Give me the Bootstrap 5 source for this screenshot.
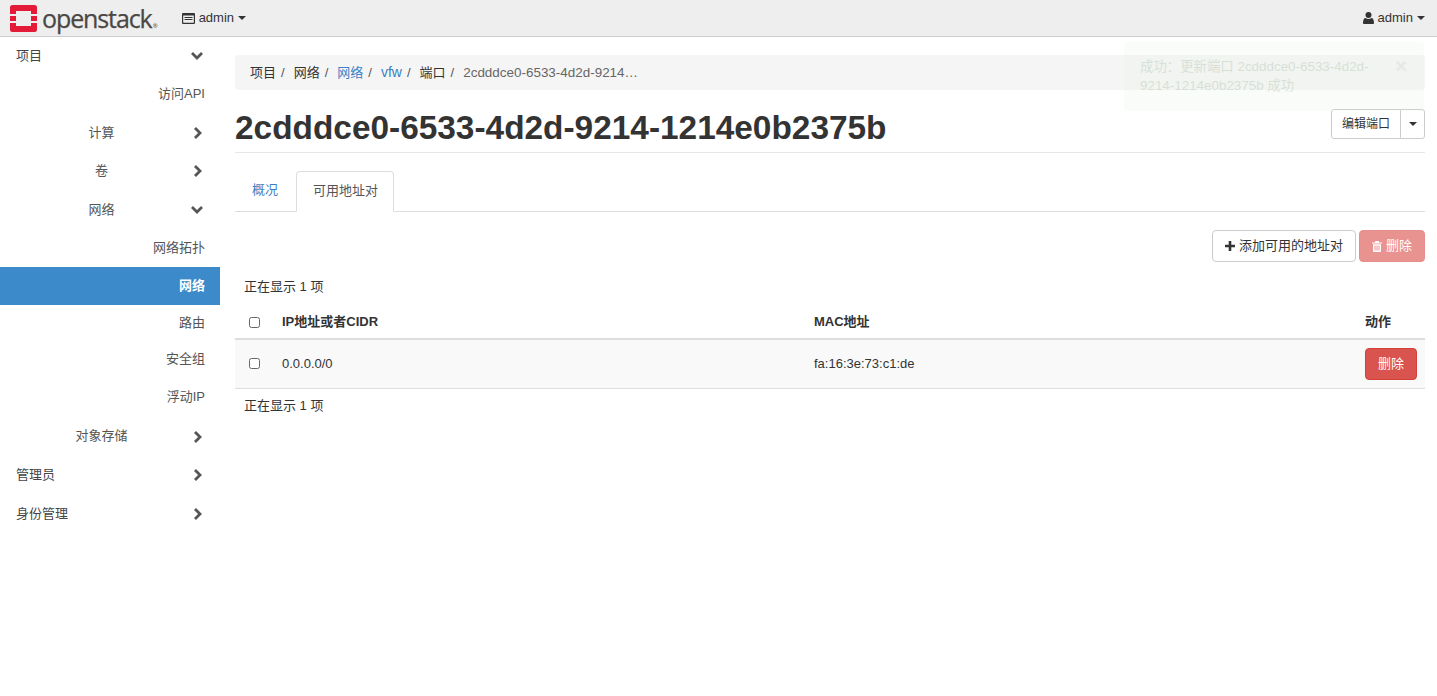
<!DOCTYPE html>
<html lang="zh">
<head>
<meta charset="utf-8">
<title>端口详情</title>
<link href="https://cdn.jsdelivr.net/npm/bootstrap@5.3.0/dist/css/bootstrap.min.css" rel="stylesheet">
<style>
html,body{height:100%}
body{font-family:"Liberation Sans","Noto Sans CJK SC",sans-serif;font-size:13px;color:#333;background:#fff;line-height:18.5px;overflow:hidden;position:relative}
a{text-decoration:none;color:#3b82c4}
.top-bar{height:37px;background:#eee;border-bottom:1px solid #ccc;padding:0 12px 0 10px}
.brand-word{font-family:"Open Sans",sans-serif;font-size:25px;letter-spacing:-1.1px;color:#4b4743;line-height:36px;margin-left:5px;-webkit-text-stroke:.25px #4b4743}
.brand-word sup{font-size:6px;top:0;vertical-align:baseline;margin-left:1px;letter-spacing:0;-webkit-text-stroke:0}
.top-item{color:#333;font-size:13px;line-height:36px}
.caret-down{display:inline-block;border-top:4.5px solid currentColor;border-left:4px solid transparent;border-right:4px solid transparent;vertical-align:middle}
.side-col{width:220px;flex:none}
.side-row{height:38.33px;padding:0 16px 0 16px;color:#555}
.side-row .lbl{flex:1}
.lv1{color:#444}
.lv2 .lbl{text-align:center;margin-right:3px}
.lv3{justify-content:flex-end;padding-right:15px}
.side-on{background:#3c8ac9;color:#fff;font-weight:700;height:38px}
.row-a{height:35.5px}
.row-b{height:37px}
.row-c{height:38px}
.row-d{height:39px}
.row-e{height:39.2px}
.row-f{height:37.5px}
.row-g{height:40px}
.main-col{width:1190px;margin-left:15px;flex:none;padding-top:18px}
.crumb-bar{background:#f5f5f5;border-radius:4px;height:35px;padding:0 15px;color:#333;line-height:35px}
.crumb-bar .sep{margin:0 9px 0 5px;color:#555}
.crumb-bar .cur{color:#666;white-space:nowrap;font-size:13.45px}
.crumb-latin{font-size:14px}
.head-row{height:63px;border-bottom:1px solid #e6e6e6;padding-top:6px}
.page-title{font-size:33.4px;font-weight:700;margin:0;color:#333;line-height:36px;padding-top:7px}
.btn-plain{font-size:12px;line-height:18px;padding:5px 10px;border:1px solid #ccc;background:#fff;color:#333;border-radius:3px;height:30px}
.btn-narrow{padding:5px 8px;width:25px}
.tabs-row{margin-top:18px;height:41px;border-bottom:1px solid #ddd;padding-left:2px}
.tab-x{height:41px;padding:0 18px 0 15px;line-height:38px;color:#3b82c4}
.tab-on{color:#555;border:1px solid #ddd;border-bottom:1px solid #fff;background:#fff;border-radius:4px 4px 0 0;padding:0 15px 0 16px}
.act-row{margin-top:18px;height:32px;gap:3px}
.btn-add{height:32px;font-size:13px;padding:0 12px;border:1px solid #ccc;border-radius:4px;background:#fff;color:#333;line-height:30px}
.btn-del-off,.btn-del-off:disabled{height:32px;font-size:13px;padding:0 12px;border:1px solid #e58f8d;border-radius:4px;background:#e99390;color:#fff;line-height:30px;opacity:1}
.count-line{padding-left:9px;margin-top:16px;height:18px;color:#333}
.grid-tbl{margin:10px 0 0;width:100%;table-layout:fixed;border-collapse:collapse;font-size:13px}
.grid-tbl th{height:33px;border-bottom:2px solid #ddd;font-weight:700;padding:0 8px;vertical-align:middle;color:#333;background:#fff}
.grid-tbl td{height:49px;border-bottom:1px solid #ddd;background:#f9f9f9;padding:0 8px;vertical-align:middle;color:#333}
.col-a{width:39px}.col-b{width:532px}.col-c{width:551px}
.box-mark{display:block;width:11px;height:11px;border:1px solid #666;border-radius:2.5px;background:#fff;margin-left:6px}
.btn-del{height:32px;width:52px;font-size:13px;padding:0;border:1px solid #d43f3a;border-radius:4px;background:#d9534f;color:#fff;line-height:30px;display:block}
.toast-x{position:absolute;left:1124px;top:42px;width:300px;height:69px;background:#dff0d8;opacity:.16;border-radius:4px;padding:16px 40px 15px 16px;color:#3c763d;font-size:13.4px;line-height:18.5px}
.toast-x .cl{position:absolute;right:17px;top:15px;font-size:20px;font-weight:700;color:#000;opacity:.3}
.count-under{margin-top:8px}
</style>
</head>
<body>
<nav class="top-bar d-flex align-items-center">
  <svg width="27" height="27" viewBox="0 0 27 27" aria-hidden="true"><path fill="#e31b38" fill-rule="evenodd" d="M2.500 0h22A2.500 2.500 0 0 1 27 2.500V9h-6V6H6v3H0V2.500A2.500 2.500 0 0 1 2.500 0zM0 11h6v5H0zM21 11h6v5h-6zM0 18h6v3h15v-3h6v6.500a2.500 2.500 0 0 1-2.500 2.500h-22A2.500 2.500 0 0 1 0 24.500z"/></svg>
  <span class="brand-word">openstack<sup>®</sup></span>
  <span class="top-item d-flex align-items-center ms-4">
    <svg width="13" height="11" viewBox="0 0 13 11" aria-hidden="true"><path fill="#333" fill-rule="evenodd" d="M1 0h11a1 1 0 0 1 1 1v9a1 1 0 0 1-1 1H1a1 1 0 0 1-1-1V1a1 1 0 0 1 1-1zm.2 2.500v7.300h10.600V2.500zM2.500 4h8v1h-8zm0 2h8v1h-8z"/></svg>
    <span class="ms-1">admin</span><span class="caret-down ms-1"></span>
  </span>
  <span class="top-item d-flex align-items-center ms-auto">
    <svg width="11" height="12" viewBox="0 0 11 12" aria-hidden="true"><circle cx="5.500" cy="3" r="3" fill="#333"/><path fill="#333" d="M0 11c0-3 1-5 2.500-5 .8.700 1.800 1 3 1s2.200-.3 3-1C10 6 11 8 11 11c0 .6-.5 1-1 1H1c-.5 0-1-.4-1-1z"/></svg>
    <span class="ms-1">admin</span><span class="caret-down ms-1"></span>
  </span>
</nav>
<div class="d-flex">
  <aside class="side-col">
    <div class="side-row lv1 d-flex align-items-center"><span class="lbl">项目</span><svg width="14" height="10" viewBox="0 0 14 10"><path d="M2 2l5 5 5-5" fill="none" stroke="#555" stroke-width="2.800"/></svg></div>
    <div class="side-row lv3 d-flex align-items-center"><span>访问API</span></div>
    <div class="side-row lv2 d-flex align-items-center"><span class="lbl">计算</span><svg width="14" height="12" viewBox="0 0 14 12"><path d="M5 1l5 5-5 5" fill="none" stroke="#555" stroke-width="2.800"/></svg></div>
    <div class="side-row lv2 d-flex align-items-center"><span class="lbl">卷</span><svg width="14" height="12" viewBox="0 0 14 12"><path d="M5 1l5 5-5 5" fill="none" stroke="#555" stroke-width="2.800"/></svg></div>
    <div class="side-row lv2 row-e d-flex align-items-center"><span class="lbl">网络</span><svg width="14" height="10" viewBox="0 0 14 10"><path d="M2 2l5 5 5-5" fill="none" stroke="#555" stroke-width="2.800"/></svg></div>
    <div class="side-row lv3 row-f d-flex align-items-center"><span>网络拓扑</span></div>
    <div class="side-row lv3 side-on d-flex align-items-center"><span>网络</span></div>
    <div class="side-row lv3 row-a d-flex align-items-center"><span>路由</span></div>
    <div class="side-row lv3 row-b d-flex align-items-center"><span>安全组</span></div>
    <div class="side-row lv3 row-g d-flex align-items-center"><span>浮动IP</span></div>
    <div class="side-row lv2 row-c d-flex align-items-center"><span class="lbl">对象存储</span><svg width="14" height="12" viewBox="0 0 14 12"><path d="M5 1l5 5-5 5" fill="none" stroke="#555" stroke-width="2.800"/></svg></div>
    <div class="side-row lv1 row-d d-flex align-items-center"><span class="lbl">管理员</span><svg width="14" height="12" viewBox="0 0 14 12"><path d="M5 1l5 5-5 5" fill="none" stroke="#555" stroke-width="2.800"/></svg></div>
    <div class="side-row lv1 row-d d-flex align-items-center"><span class="lbl">身份管理</span><svg width="14" height="12" viewBox="0 0 14 12"><path d="M5 1l5 5-5 5" fill="none" stroke="#555" stroke-width="2.800"/></svg></div>
  </aside>
  <main class="main-col">
    <div class="crumb-bar d-flex">
      <span>项目</span><span class="sep">/</span>
      <span>网络</span><span class="sep">/</span>
      <a href="#">网络</a><span class="sep">/</span>
      <a href="#" class="crumb-latin">vfw</a><span class="sep">/</span>
      <span>端口</span><span class="sep">/</span>
      <span class="cur">2cdddce0-6533-4d2d-9214…</span>
    </div>
    <div class="head-row d-flex justify-content-between align-items-center">
      <h1 class="page-title">2cdddce0-6533-4d2d-9214-1214e0b2375b</h1>
      <div class="btn-group">
        <button type="button" class="btn btn-plain">编辑端口</button>
        <button type="button" class="btn btn-plain btn-narrow d-flex align-items-center justify-content-center"><span class="caret-down"></span></button>
      </div>
    </div>
    <div class="tabs-row d-flex">
      <a class="tab-x" href="#">概况</a>
      <a class="tab-x tab-on" href="#">可用地址对</a>
    </div>
    <div class="act-row d-flex justify-content-end">
      <button type="button" class="btn btn-add d-flex align-items-center gap-1"><svg width="10" height="10" viewBox="0 0 10 10"><path fill="#333" d="M3.700 0h2.600v3.700H10v2.600H6.300V10H3.700V6.300H0V3.700h3.700z"/></svg>添加可用的地址对</button>
      <button type="button" class="btn btn-del-off d-flex align-items-center gap-1" disabled><svg width="10" height="11" viewBox="0 0 10 11"><path fill="#fff" fill-rule="evenodd" d="M3.500 0h3l.7 1.500H10v1H0v-1h2.800zM1 3.200h8V10a1 1 0 0 1-1 1H2a1 1 0 0 1-1-1zm1.500 1.300v5h1v-5zm2 0v5h1v-5zm2 0v5h1v-5z"/></svg>删除</button>
    </div>
    <div class="count-line">正在显示 1 项</div>
    <table class="grid-tbl">
      <colgroup><col class="col-a"><col class="col-b"><col class="col-c"><col></colgroup>
      <thead><tr><th><span class="box-mark"></span></th><th>IP地址或者CIDR</th><th>MAC地址</th><th class="text-start">动作</th></tr></thead>
      <tbody><tr><td><span class="box-mark"></span></td><td>0.0.0.0/0</td><td>fa:16:3e:73:c1:de</td><td><button type="button" class="btn btn-del">删除</button></td></tr></tbody>
    </table>
    <div class="count-line count-under">正在显示 1 项</div>
  </main>
</div>
<div class="toast-x">成功：更新端口 2cdddce0-6533-4d2d-9214-1214e0b2375b 成功<span class="cl">×</span></div>
<script src="https://cdn.jsdelivr.net/npm/bootstrap@5.3.0/dist/js/bootstrap.bundle.min.js"></script>
</body>
</html>
